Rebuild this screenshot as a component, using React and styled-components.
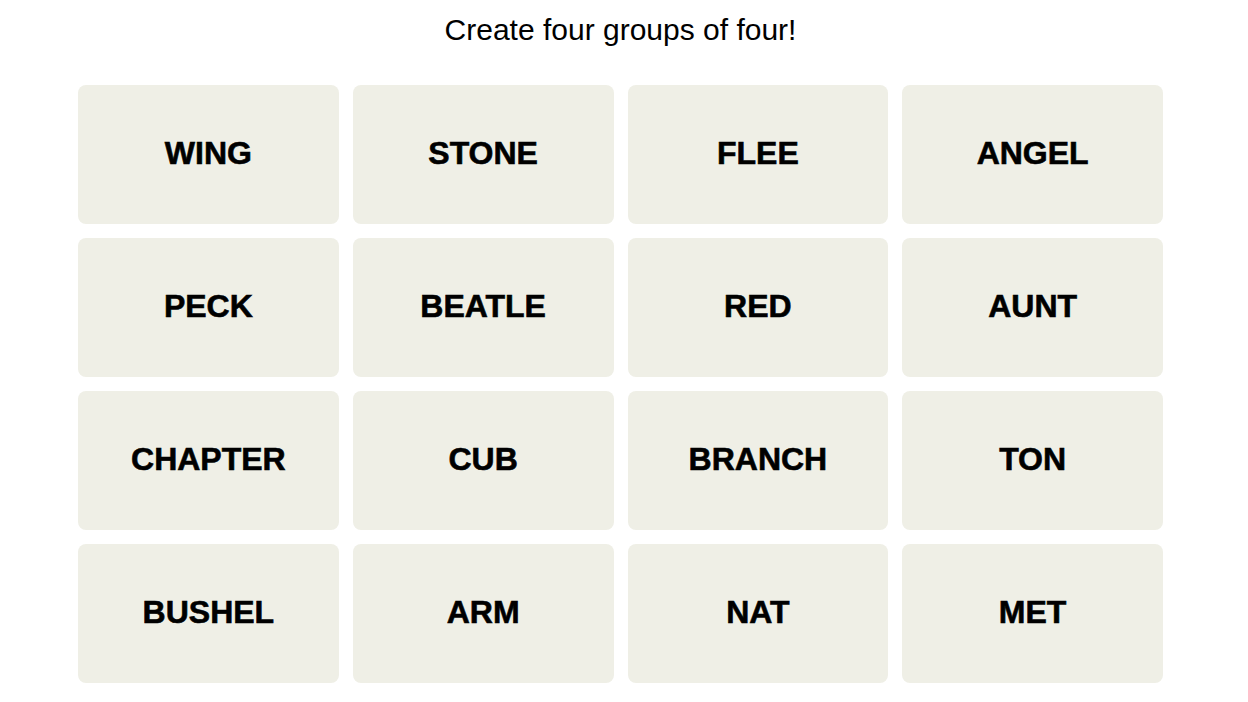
import React from "react";
import styled, { createGlobalStyle } from "styled-components";

const GlobalStyle = createGlobalStyle`
  html, body {
    margin: 0;
    padding: 0;
    background: #fff;
  }
  body {
    font-family: "Liberation Sans", Arial, sans-serif;
    color: #000;
  }
`;

const Board = styled.main`
  width: 1241px;
  display: flex;
  flex-direction: column;
  align-items: center;
  padding-top: 15px;
`;

const Prompt = styled.h2`
  margin: 0;
  font-size: 30px;
  line-height: 30px;
  font-weight: 400;
  color: #000;
`;

const Grid = styled.div`
  margin-top: 40px;
  width: 1085px;
  display: grid;
  grid-template-columns: repeat(4, 1fr);
  grid-auto-rows: 139px;
  gap: 14px;
`;

const Tile = styled.button`
  border: none;
  border-radius: 8px;
  background: #efefe6;
  display: flex;
  align-items: center;
  justify-content: center;
  padding: 0 0 2px;
  font-family: "Liberation Sans", Arial, sans-serif;
  font-size: 32px;
  font-weight: 700;
  -webkit-text-stroke: 0.6px #000;
  color: #000;
  text-transform: uppercase;
  cursor: pointer;
`;

const words = [
  "WING", "STONE", "FLEE", "ANGEL",
  "PECK", "BEATLE", "RED", "AUNT",
  "CHAPTER", "CUB", "BRANCH", "TON",
  "BUSHEL", "ARM", "NAT", "MET",
];

const App = () => {
  return (
    <>
      <GlobalStyle />
      <Board>
        <Prompt>Create four groups of four!</Prompt>
        <Grid>
          {words.map((word) => (
            <Tile key={word}>{word}</Tile>
          ))}
        </Grid>
      </Board>
    </>
  );
};

export default App;
